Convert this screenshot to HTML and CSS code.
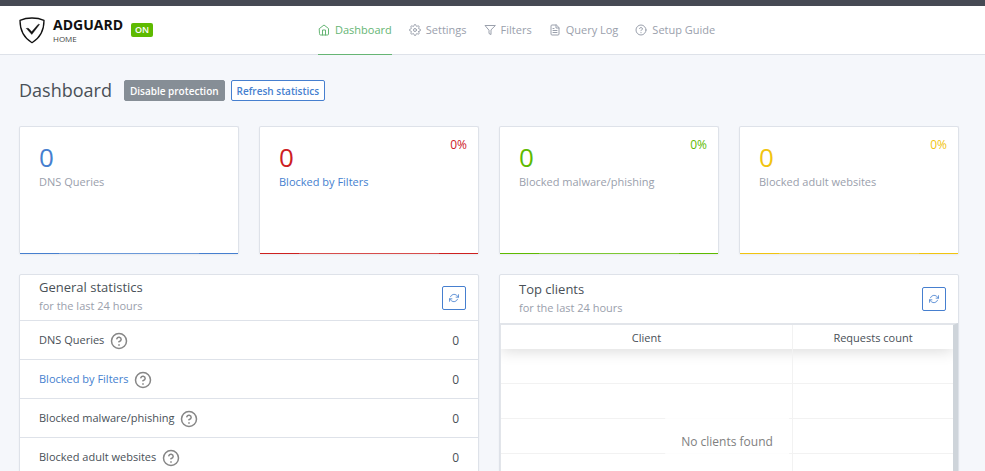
FILE: index.html
```
<!doctype html>
<html lang="en">
	<head>
		<meta charset="utf-8">
		<title>AdGuard Home</title>
		<link rel="stylesheet" href="styles.css">
	</head>
	<body>
		<svg class="sprite">
			<symbol id="refresh" viewBox="0 0 24 24">
				<path d="M23 4v6h-6M1 20v-6h6M3.510 9a9 9 0 0 1 14.850-3.360L23 10M1 14l4.640 4.360A9 9 0 0 0 20.490 15"/>
			</symbol>
			<symbol id="question" viewBox="0 0 24 24">
				<circle cx="12" cy="12" r="10"/>
				<path d="M9.090 9a3 3 0 0 1 5.830 1c0 2-3 3-3 3M12 17v.5"/>
			</symbol>
		</svg>
		<header>
			<div class="container bar">
				<a class="brand" href="#">
					<svg class="shield" viewBox="0 0 26 27">
						<path d="M13 1C9 1 4.500 1.800 1 3.300c0 4.200-.3 15.200 12 22.400C25.300 18.500 25 7.500 25 3.300 21.500 1.800 17 1 13 1z" fill="none" stroke="#111" stroke-width="1.300"/>
						<path d="M7.500 11.500l5.300 6L20.500 7.500c-.8-.6-1.500 0-1.500 0l-6.300 7.200-2.800-3c-1.300-1-2.400-.2-2.400-.2z" fill="#111" stroke="#111" stroke-width=".4"/>
					</svg>
					<span class="name"><b>ADGUARD</b><small>HOME</small></span>
					<span class="on">ON</span>
				</a>
				<nav>
					<a class="active" href="#"><svg viewBox="0 0 24 24"><path d="M3 9l9-7 9 7v11a2 2 0 0 1-2 2H5a2 2 0 0 1-2-2zM9 22V12h6v10"/></svg>Dashboard</a>
					<a href="#"><svg viewBox="0 0 24 24"><circle cx="12" cy="12" r="3"/><path d="M19.400 15a1.650 1.650 0 0 0 .33 1.820l.06.06a2 2 0 0 1-2.830 2.830l-.06-.06a1.650 1.650 0 0 0-2.800 1.170V21a2 2 0 0 1-4 0v-.09A1.650 1.650 0 0 0 7.200 19.700l-.06.06a2 2 0 0 1-2.830-2.830l.06-.06A1.650 1.650 0 0 0 3.090 14H3a2 2 0 0 1 0-4h.09A1.650 1.650 0 0 0 4.300 7.200l-.06-.06a2 2 0 0 1 2.830-2.830l.06.06A1.650 1.650 0 0 0 10 3.090V3a2 2 0 0 1 4 0v.09a1.650 1.650 0 0 0 2.800 1.210l.06-.06a2 2 0 0 1 2.830 2.830l-.06.06A1.650 1.650 0 0 0 20.910 10H21a2 2 0 0 1 0 4h-.09a1.650 1.650 0 0 0-1.510 1z"/></svg>Settings</a>
					<a href="#"><svg viewBox="0 0 24 24"><path d="M22 3H2l8 9.460V19l4 2v-8.540z"/></svg>Filters</a>
					<a href="#"><svg viewBox="0 0 24 24"><path d="M14 2H6a2 2 0 0 0-2 2v16a2 2 0 0 0 2 2h12a2 2 0 0 0 2-2V8zM14 2v6h6M16 13H8M16 17H8M10 9H8"/></svg>Query Log</a>
					<a href="#"><svg><use href="#question"/></svg>Setup Guide</a>
				</nav>
			</div>
		</header>
		<main class="container">
			<div class="title">
				<h1>Dashboard</h1>
				<button class="disable">Disable protection</button>
				<button class="outline">Refresh statistics</button>
			</div>
			<section class="counters">
				<article class="card counter blue">
					<strong>0</strong>
					<p>DNS Queries</p>
				</article>
				<article class="card counter red">
					<strong>0</strong>
					<p><a href="#">Blocked by Filters</a></p>
					<span class="percent">0%</span>
				</article>
				<article class="card counter green">
					<strong>0</strong>
					<p>Blocked malware/phishing</p>
					<span class="percent">0%</span>
				</article>
				<article class="card counter yellow">
					<strong>0</strong>
					<p>Blocked adult websites</p>
					<span class="percent">0%</span>
				</article>
			</section>
			<section class="panels">
				<article class="card">
					<div class="head">
						<div>
							<h3>General statistics</h3>
							<p>for the last 24 hours</p>
						</div>
						<button class="refresh" aria-label="Refresh"><svg><use href="#refresh"/></svg></button>
					</div>
					<table class="general">
						<tr><td>DNS Queries<svg><use href="#question"/></svg></td><td>0</td></tr>
						<tr><td><a href="#">Blocked by Filters</a><svg><use href="#question"/></svg></td><td>0</td></tr>
						<tr><td>Blocked malware/phishing<svg><use href="#question"/></svg></td><td>0</td></tr>
						<tr><td>Blocked adult websites<svg><use href="#question"/></svg></td><td>0</td></tr>
					</table>
				</article>
				<article class="card">
					<div class="head tall">
						<div>
							<h3>Top clients</h3>
							<p>for the last 24 hours</p>
						</div>
						<button class="refresh" aria-label="Refresh"><svg><use href="#refresh"/></svg></button>
					</div>
					<div class="scroller">
						<table class="clients">
							<thead>
								<tr><th>Client</th><th>Requests count</th></tr>
							</thead>
							<tbody>
								<tr><td></td><td></td></tr>
								<tr><td></td><td></td></tr>
								<tr><td></td><td></td></tr>
								<tr><td></td><td></td></tr>
								<tr><td></td><td></td></tr>
								<tr><td></td><td></td></tr>
							</tbody>
						</table>
						<div class="empty">No clients found</div>
					</div>
				</article>
			</section>
		</main>
	</body>
</html>
```

FILE: styles.css
```
*{padding:0px;margin:0px;box-sizing:border-box;}
body{
	background:#f5f7fb;
	color:#495057;
	font-family:"Open Sans","Noto Sans",sans-serif;
	font-size:11px;
	line-height:18px;
	border-top:6px solid #464a54;
}
a{
	color:#467fcf;
	text-decoration:none;
}
button{
	font-family:inherit;
	cursor:pointer;
}
svg{
	fill:none;
	stroke:currentColor;
	stroke-width:2;
	stroke-linecap:round;
	stroke-linejoin:round;
}
.sprite{
	display:none;
}
.container{
	padding:0px 26px 0px 19px;
}
header{
	background:white;
	border-bottom:1px solid #dee2e9;
}
.bar{
	display:grid;
	grid-template-columns:299px 1fr;
	height:48px;
}
.brand{
	display:flex;
	align-items:center;
	color:#111;
}
.shield{
	width:26px;
	height:27px;
	margin-right:8px;
}
.name b,.name small{
	display:block;
}
.name b{
	font-size:14px;
	line-height:16px;
}
.name small{
	color:#444;
	font-size:8px;
	line-height:11px;
}
.on{
	margin-left:8px;
	padding:0px 4px;
	border-radius:2px;
	background:#5eba00;
	color:white;
	font-size:9px;
	font-weight:600;
	line-height:14px;
}
nav{
	display:flex;
	gap:17px;
	margin-bottom:-1px;
}
nav a{
	display:flex;
	align-items:center;
	color:#9aa0ac;
	white-space:nowrap;
	border-bottom:1px solid transparent;
}
nav a.active{
	color:#66b574;
	border-color:#66b574;
}
nav svg{
	width:12px;
	height:12px;
	margin-right:5px;
}
.title{
	display:flex;
	align-items:center;
	gap:6px;
	padding:24px 0px;
}
h1{
	margin-right:6px;
	font-size:18px;
	font-weight:400;
	line-height:23px;
}
.title button{
	height:21px;
	padding:0px 5px;
	border:1px solid #467fcf;
	border-radius:2px;
	background:white;
	color:#467fcf;
	font-size:10px;
	font-weight:600;
}
.title .disable{
	background:#868e96;
	border-color:#868e96;
	color:white;
}
.card{
	background:white;
	border:1px solid #dee2e9;
	border-radius:2px;
	box-shadow:0px 1px 2px rgba(0,0,0,0.05);
}
.counters{
	display:grid;
	grid-template-columns:repeat(4,1fr);
	gap:20px;
	margin-bottom:20px;
}
.counter{
	position:relative;
	min-height:128px;
	padding:17px 19px;
	color:#9aa0ac;
	border-bottom:0px;
}
/* empty sparkline at the foot of the card */
.counter::after{
	content:"";
	position:absolute;
	left:0px;
	right:0px;
	bottom:0px;
	height:1px;
	background:linear-gradient(to right,transparent 39px,rgba(255,255,255,0.2) 39px,rgba(255,255,255,0.2) calc(100% - 39px),transparent calc(100% - 39px)),var(--tone);
}
.counter strong{
	display:block;
	color:var(--tone);
	font-size:26px;
	font-weight:400;
	line-height:26px;
	margin-bottom:3px;
}
.percent{
	position:absolute;
	top:9px;
	right:11px;
	color:var(--tone);
	font-size:12px;
}
.blue{--tone:#467fcf;}
.red{--tone:#cd201f;}
.green{--tone:#5eba00;}
.yellow{--tone:#f1c40f;}
.panels{
	display:grid;
	grid-template-columns:repeat(2,1fr);
	gap:20px;
	align-items:start;
}
.head{
	display:flex;
	justify-content:space-between;
	align-items:center;
	height:45px;
	padding:0px 12px 0px 19px;
}
.head.tall{
	height:48px;
}
.head div{
	padding-bottom:3px;
}
.head h3{
	font-size:13px;
	font-weight:400;
	line-height:20px;
}
.head p{
	color:#9aa0ac;
}
.refresh{
	display:grid;
	place-items:center;
	width:24px;
	height:24px;
	border:1px solid #467fcf;
	border-radius:2px;
	background:white;
	color:#467fcf;
}
.refresh svg{
	width:10px;
	height:10px;
}
table{
	width:100%;
	border-spacing:0px;
}
.general td{
	height:39px;
	padding:1px 19px 0px;
	border-top:1px solid #dee2e9;
}
.general td:last-child{
	text-align:right;
	font-size:12px;
}
.general svg{
	width:18px;
	height:18px;
	margin-left:6px;
	color:#868686;
	vertical-align:middle;
}
.scroller{
	position:relative;
	overflow:hidden;
	border:1px solid #e2e5ea;
	border-top-width:2px;
	border-right:5px solid #ced4da;
}
.clients{
	table-layout:fixed;
}
.clients th{
	height:24px;
	padding-top:2px;
	font-weight:400;
}
.clients th:last-child{
	width:161px;
}
.clients thead{
	box-shadow:0px 2px 15px rgba(0,0,0,0.15);
}
.clients td{
	height:35px;
	border-bottom:1px solid #f2f2f2;
}
.clients th:last-child,.clients td:last-child{
	border-left:1px solid #f2f2f2;
}
.empty{
	position:absolute;
	top:50%;
	left:50%;
	padding:16px;
	background:rgba(255,255,255,0.8);
	color:#808080;
	font-size:12px;
	transform:translate(-50%,-50%);
}
```
